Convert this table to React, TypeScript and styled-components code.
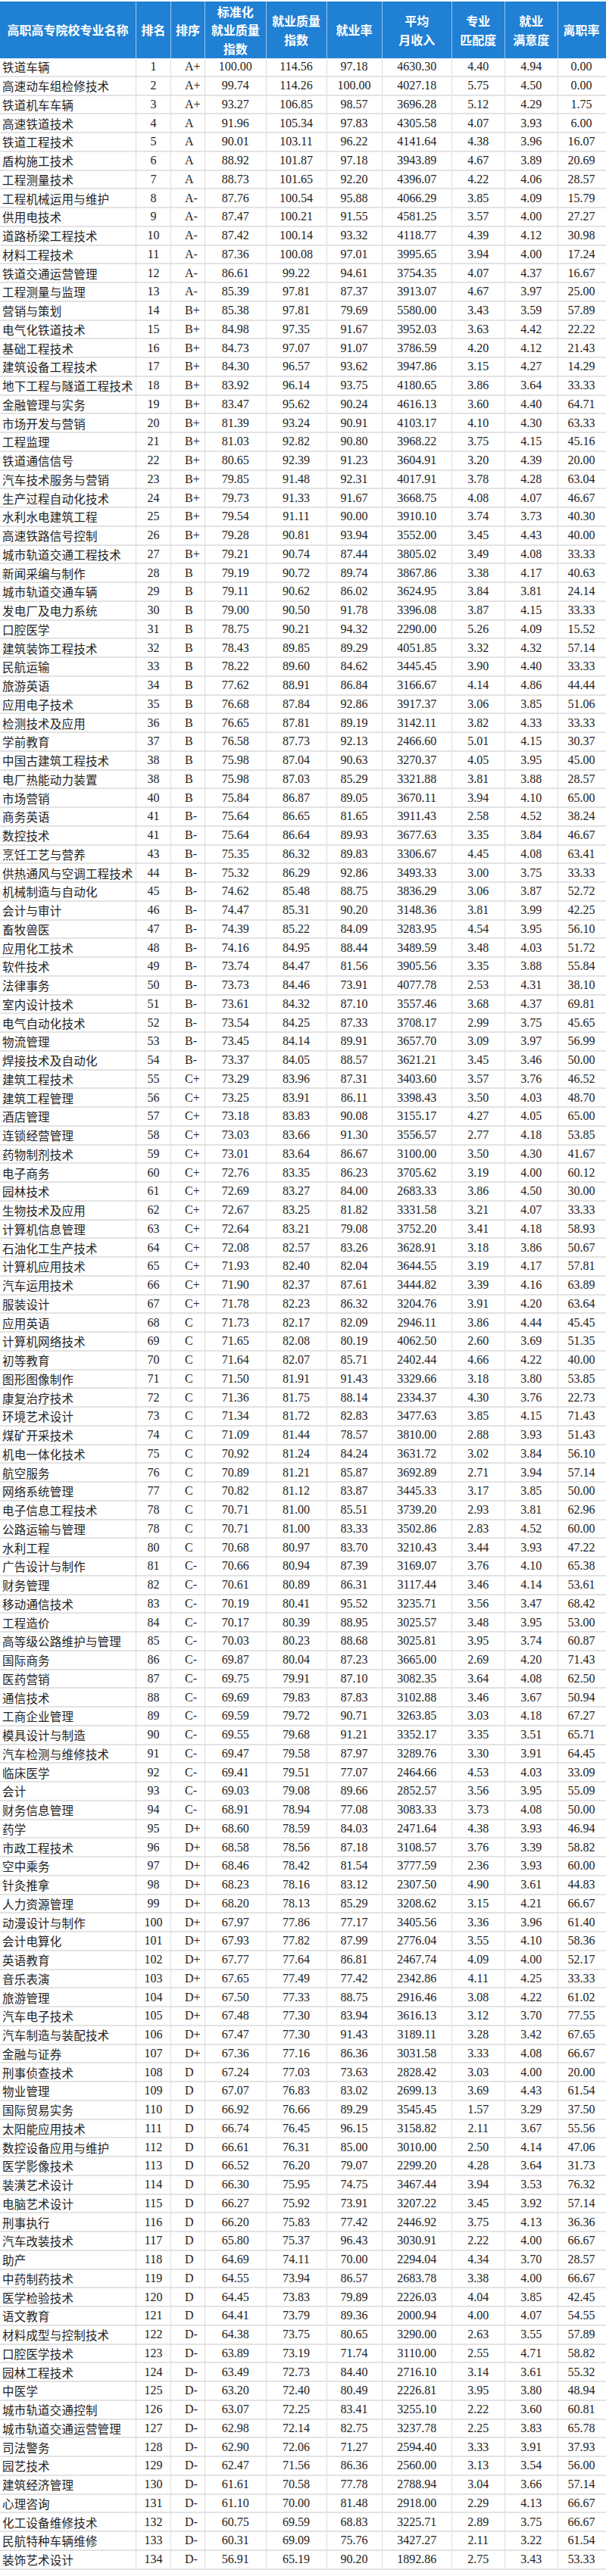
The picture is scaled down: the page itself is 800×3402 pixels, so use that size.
import React from "react";
import styled, { createGlobalStyle } from "styled-components";

const GlobalStyle = createGlobalStyle`
    body{
        margin:0;
        background:#fff;
    }
`;

const COLS = "180px 46px 45px 80.5px 80px 73px 92.5px 69.5px 70.5px 61px";

const DATA = `铁道车辆 1 A+ 100.00 114.56 97.18 4630.30 4.40 4.94 0.00
高速动车组检修技术 2 A+ 99.74 114.26 100.00 4027.18 5.75 4.50 0.00
铁道机车车辆 3 A+ 93.27 106.85 98.57 3696.28 5.12 4.29 1.75
高速铁道技术 4 A 91.96 105.34 97.83 4305.58 4.07 3.93 6.00
铁道工程技术 5 A 90.01 103.11 96.22 4141.64 4.38 3.96 16.07
盾构施工技术 6 A 88.92 101.87 97.18 3943.89 4.67 3.89 20.69
工程测量技术 7 A 88.73 101.65 92.20 4396.07 4.22 4.06 28.57
工程机械运用与维护 8 A- 87.76 100.54 95.88 4066.29 3.85 4.09 15.79
供用电技术 9 A- 87.47 100.21 91.55 4581.25 3.57 4.00 27.27
道路桥梁工程技术 10 A- 87.42 100.14 93.32 4118.77 4.39 4.12 30.98
材料工程技术 11 A- 87.36 100.08 97.01 3995.65 3.94 4.00 17.24
铁道交通运营管理 12 A- 86.61 99.22 94.61 3754.35 4.07 4.37 16.67
工程测量与监理 13 A- 85.39 97.81 87.37 3913.07 4.67 3.97 25.00
营销与策划 14 B+ 85.38 97.81 79.69 5580.00 3.43 3.59 57.89
电气化铁道技术 15 B+ 84.98 97.35 91.67 3952.03 3.63 4.42 22.22
基础工程技术 16 B+ 84.73 97.07 91.07 3786.59 4.20 4.12 21.43
建筑设备工程技术 17 B+ 84.30 96.57 93.62 3947.86 3.15 4.27 14.29
地下工程与隧道工程技术 18 B+ 83.92 96.14 93.75 4180.65 3.86 3.64 33.33
金融管理与实务 19 B+ 83.47 95.62 90.24 4616.13 3.60 4.40 64.71
市场开发与营销 20 B+ 81.39 93.24 90.91 4103.17 4.10 4.30 63.33
工程监理 21 B+ 81.03 92.82 90.80 3968.22 3.75 4.15 45.16
铁道通信信号 22 B+ 80.65 92.39 91.23 3604.91 3.20 4.39 20.00
汽车技术服务与营销 23 B+ 79.85 91.48 92.31 4017.91 3.78 4.28 63.04
生产过程自动化技术 24 B+ 79.73 91.33 91.67 3668.75 4.08 4.07 46.67
水利水电建筑工程 25 B+ 79.54 91.11 90.00 3910.10 3.74 3.73 40.30
高速铁路信号控制 26 B+ 79.28 90.81 93.94 3552.00 3.45 4.43 40.00
城市轨道交通工程技术 27 B+ 79.21 90.74 87.44 3805.02 3.49 4.08 33.33
新闻采编与制作 28 B 79.19 90.72 89.74 3867.86 3.38 4.17 40.63
城市轨道交通车辆 29 B 79.11 90.62 86.02 3624.95 3.84 3.81 24.14
发电厂及电力系统 30 B 79.00 90.50 91.78 3396.08 3.87 4.15 33.33
口腔医学 31 B 78.75 90.21 94.32 2290.00 5.26 4.09 15.52
建筑装饰工程技术 32 B 78.43 89.85 89.29 4051.85 3.32 4.32 57.14
民航运输 33 B 78.22 89.60 84.62 3445.45 3.90 4.40 33.33
旅游英语 34 B 77.62 88.91 86.84 3166.67 4.14 4.86 44.44
应用电子技术 35 B 76.68 87.84 92.86 3917.37 3.06 3.85 51.06
检测技术及应用 36 B 76.65 87.81 89.19 3142.11 3.82 4.33 33.33
学前教育 37 B 76.58 87.73 92.13 2466.60 5.01 4.15 30.37
中国古建筑工程技术 38 B 75.98 87.04 90.63 3270.37 4.05 3.95 45.00
电厂热能动力装置 38 B 75.98 87.03 85.29 3321.88 3.81 3.88 28.57
市场营销 40 B 75.84 86.87 89.05 3670.11 3.94 4.10 65.00
商务英语 41 B- 75.64 86.65 81.65 3911.43 2.58 4.52 38.24
数控技术 41 B- 75.64 86.64 89.93 3677.63 3.35 3.84 46.67
烹饪工艺与营养 43 B- 75.35 86.32 89.83 3306.67 4.45 4.08 63.41
供热通风与空调工程技术 44 B- 75.32 86.29 92.86 3493.33 3.00 3.75 33.33
机械制造与自动化 45 B- 74.62 85.48 88.75 3836.29 3.06 3.87 52.72
会计与审计 46 B- 74.47 85.31 90.20 3148.36 3.81 3.99 42.25
畜牧兽医 47 B- 74.39 85.22 84.09 3283.95 4.54 3.95 56.10
应用化工技术 48 B- 74.16 84.95 88.44 3489.59 3.48 4.03 51.72
软件技术 49 B- 73.74 84.47 81.56 3905.56 3.35 3.88 55.84
法律事务 50 B- 73.73 84.46 73.91 4077.78 2.53 4.31 38.10
室内设计技术 51 B- 73.61 84.32 87.10 3557.46 3.68 4.37 69.81
电气自动化技术 52 B- 73.54 84.25 87.33 3708.17 2.99 3.75 45.65
物流管理 53 B- 73.45 84.14 89.91 3657.70 3.09 3.97 56.99
焊接技术及自动化 54 B- 73.37 84.05 88.57 3621.21 3.45 3.46 50.00
建筑工程技术 55 C+ 73.29 83.96 87.31 3403.60 3.57 3.76 46.52
建筑工程管理 56 C+ 73.25 83.91 86.11 3398.43 3.50 4.03 48.70
酒店管理 57 C+ 73.18 83.83 90.08 3155.17 4.27 4.05 65.00
连锁经营管理 58 C+ 73.03 83.66 91.30 3556.57 2.77 4.18 53.85
药物制剂技术 59 C+ 73.01 83.64 86.67 3100.00 3.50 4.30 41.67
电子商务 60 C+ 72.76 83.35 86.23 3705.62 3.19 4.00 60.12
园林技术 61 C+ 72.69 83.27 84.00 2683.33 3.86 4.50 30.00
生物技术及应用 62 C+ 72.67 83.25 81.82 3331.58 3.21 4.07 33.33
计算机信息管理 63 C+ 72.64 83.21 79.08 3752.20 3.41 4.18 58.93
石油化工生产技术 64 C+ 72.08 82.57 83.26 3628.91 3.18 3.86 50.67
计算机应用技术 65 C+ 71.93 82.40 82.04 3644.55 3.19 4.17 57.81
汽车运用技术 66 C+ 71.90 82.37 87.61 3444.82 3.39 4.16 63.89
服装设计 67 C+ 71.78 82.23 86.32 3204.76 3.91 4.20 63.64
应用英语 68 C 71.73 82.17 82.09 2946.11 3.86 4.44 45.45
计算机网络技术 69 C 71.65 82.08 80.19 4062.50 2.60 3.69 51.35
初等教育 70 C 71.64 82.07 85.71 2402.44 4.66 4.22 40.00
图形图像制作 71 C 71.50 81.91 91.43 3329.66 3.18 3.80 53.85
康复治疗技术 72 C 71.36 81.75 88.14 2334.37 4.30 3.76 22.73
环境艺术设计 73 C 71.34 81.72 82.83 3477.63 3.85 4.15 71.43
煤矿开采技术 74 C 71.09 81.44 78.57 3810.00 2.88 3.93 51.43
机电一体化技术 75 C 70.92 81.24 84.24 3631.72 3.02 3.84 56.10
航空服务 76 C 70.89 81.21 85.87 3692.89 2.71 3.94 57.14
网络系统管理 77 C 70.82 81.12 83.87 3445.33 3.17 3.85 50.00
电子信息工程技术 78 C 70.71 81.00 85.51 3739.20 2.93 3.81 62.96
公路运输与管理 78 C 70.71 81.00 83.33 3502.86 2.83 4.52 60.00
水利工程 80 C 70.68 80.97 83.70 3210.43 3.44 3.93 47.22
广告设计与制作 81 C- 70.66 80.94 87.39 3169.07 3.76 4.10 65.38
财务管理 82 C- 70.61 80.89 86.31 3117.44 3.46 4.14 53.61
移动通信技术 83 C- 70.19 80.41 95.52 3235.71 3.56 3.47 68.42
工程造价 84 C- 70.17 80.39 88.95 3025.57 3.48 3.95 53.00
高等级公路维护与管理 85 C- 70.03 80.23 88.68 3025.81 3.95 3.74 60.87
国际商务 86 C- 69.87 80.04 87.23 3665.00 2.69 4.20 71.43
医药营销 87 C- 69.75 79.91 87.10 3082.35 3.64 4.08 62.50
通信技术 88 C- 69.69 79.83 87.83 3102.88 3.46 3.67 50.94
工商企业管理 89 C- 69.59 79.72 90.71 3263.85 3.03 4.18 67.27
模具设计与制造 90 C- 69.55 79.68 91.21 3352.17 3.35 3.51 65.71
汽车检测与维修技术 91 C- 69.47 79.58 87.97 3289.76 3.30 3.91 64.45
临床医学 92 C- 69.41 79.51 77.07 2464.66 4.53 4.03 33.09
会计 93 C- 69.03 79.08 89.66 2852.57 3.56 3.95 55.09
财务信息管理 94 C- 68.91 78.94 77.08 3083.33 3.73 4.08 50.00
药学 95 D+ 68.60 78.59 84.03 2471.64 4.38 3.93 46.94
市政工程技术 96 D+ 68.58 78.56 87.18 3108.57 3.76 3.39 58.82
空中乘务 97 D+ 68.46 78.42 81.54 3777.59 2.36 3.93 60.00
针灸推拿 98 D+ 68.23 78.16 83.12 2307.50 4.90 3.61 44.83
人力资源管理 99 D+ 68.20 78.13 85.29 3208.62 3.15 4.21 66.67
动漫设计与制作 100 D+ 67.97 77.86 77.17 3405.56 3.36 3.96 61.40
会计电算化 101 D+ 67.93 77.82 87.99 2776.04 3.55 4.10 58.36
英语教育 102 D+ 67.77 77.64 86.81 2467.74 4.09 4.00 52.17
音乐表演 103 D+ 67.65 77.49 77.42 2342.86 4.11 4.25 33.33
旅游管理 104 D+ 67.50 77.33 88.75 2916.46 3.08 4.22 61.02
汽车电子技术 105 D+ 67.48 77.30 83.94 3616.13 3.12 3.70 77.55
汽车制造与装配技术 106 D+ 67.47 77.30 91.43 3189.11 3.28 3.42 67.65
金融与证券 107 D+ 67.36 77.16 86.36 3031.58 3.33 4.08 66.67
刑事侦查技术 108 D 67.24 77.03 73.63 2828.42 3.03 4.00 20.00
物业管理 109 D 67.07 76.83 83.02 2699.13 3.69 4.43 61.54
国际贸易实务 110 D 66.92 76.66 89.29 3545.45 1.57 3.29 37.50
太阳能应用技术 111 D 66.74 76.45 96.15 3158.82 2.11 3.67 55.56
数控设备应用与维护 112 D 66.61 76.31 85.00 3010.00 2.50 4.14 47.06
医学影像技术 113 D 66.52 76.20 79.07 2299.20 4.28 3.64 31.73
装潢艺术设计 114 D 66.30 75.95 74.75 3467.44 3.94 3.53 76.32
电脑艺术设计 115 D 66.27 75.92 73.91 3207.22 3.45 3.92 57.14
刑事执行 116 D 66.20 75.83 77.42 2446.92 3.75 4.13 36.36
汽车改装技术 117 D 65.80 75.37 96.43 3030.91 2.22 4.00 66.67
助产 118 D 64.69 74.11 70.00 2294.04 4.34 3.70 28.57
中药制药技术 119 D 64.55 73.94 86.57 2683.78 3.38 4.00 66.67
医学检验技术 120 D 64.45 73.83 79.89 2226.03 4.04 3.85 42.45
语文教育 121 D 64.41 73.79 89.36 2000.94 4.00 4.07 54.55
材料成型与控制技术 122 D- 64.38 73.75 80.65 3290.00 2.63 3.55 57.89
口腔医学技术 123 D- 63.89 73.19 71.74 3110.00 2.55 4.71 58.82
园林工程技术 124 D- 63.49 72.73 84.40 2716.10 3.14 3.61 55.32
中医学 125 D- 63.20 72.40 80.49 2226.81 3.95 3.80 48.94
城市轨道交通控制 126 D- 63.07 72.25 83.41 3255.10 2.22 3.60 60.81
城市轨道交通运营管理 127 D- 62.98 72.14 82.75 3237.78 2.25 3.83 65.78
司法警务 128 D- 62.90 72.06 71.27 2594.40 3.33 3.91 37.93
园艺技术 129 D- 62.47 71.56 86.36 2560.00 3.13 3.54 56.00
建筑经济管理 130 D- 61.61 70.58 77.78 2788.94 3.04 3.66 57.14
心理咨询 131 D- 61.10 70.00 81.48 2918.00 2.29 4.13 66.67
化工设备维修技术 132 D- 60.75 69.59 68.83 3225.71 2.89 3.75 66.67
民航特种车辆维修 133 D- 60.31 69.09 75.76 3427.27 2.11 3.22 61.54
装饰艺术设计 134 D- 56.91 65.19 90.20 1892.86 2.75 3.43 53.33`;

const HEADERS = [
    ["高职高专院校专业名称"],
    ["排名"],
    ["排序"],
    ["标准化", "就业质量", "指数"],
    ["就业质量", "指数"],
    ["就业率"],
    ["平均", "月收入"],
    ["专业", "匹配度"],
    ["就业", "满意度"],
    ["离职率"],
];

const Page = styled.div`
    width:800px;
    padding-top:2px;
`;

const HeaderRow = styled.div`
    display:grid;
    grid-template-columns:${COLS};
    height:75px;
    background:#1f80d4;
`;

const HeadCell = styled.div`
    display:flex;
    flex-direction:column;
    align-items:center;
    justify-content:center;
    text-align:center;
    color:#fff;
    font-family:"Noto Sans CJK SC", sans-serif;
    font-weight:700;
    font-size:16px;
    line-height:24.5px;
    white-space:nowrap;
    border-right:1px solid rgba(255,255,255,0.55);
    &:last-child{
        border-right:none;
    }
`;

const Row = styled.div`
    display:grid;
    grid-template-columns:${COLS};
    height:24.76px;
    box-sizing:border-box;
    border-bottom:2px solid #e3e3e3;
`;

const Cell = styled.div<{ $align?: "left" | "center"; $pad?: number }>`
    display:flex;
    align-items:center;
    justify-content:${({ $align }) => ($align === "left" ? "flex-start" : "center")};
    padding-left:${({ $pad }) => $pad ?? 0}px;
    border-right:1px solid #dcdcdc;
    color:#232323;
    font-family:"Liberation Serif", "Noto Sans CJK SC", serif;
    font-size:16px;
    white-space:nowrap;
    overflow:hidden;
    &:last-child{
        border-right:none;
    }
`;

const NameCell = styled(Cell)`
    font-family:"Noto Sans CJK SC", sans-serif;
    font-size:15.5px;
    letter-spacing:0.2px;
`;

function App() {
    const rows = DATA.split("\n").map(line => line.trim().split(/\s+/));

    return <Page>
        <GlobalStyle />
        <HeaderRow>
            {HEADERS.map((lines, i) => <HeadCell key={i}>
                {lines.map(l => <span key={l}>{l}</span>)}
            </HeadCell>)}
        </HeaderRow>
        {rows.map(([name, rank, grade, ...nums], index) => {
            return <Row key={index}>
                <NameCell $align="left" $pad={3}>{name}</NameCell>
                <Cell>{rank}</Cell>
                <Cell $align="left" $pad={18}>{grade}</Cell>
                {nums.map((n, j) => <Cell key={j}>{n}</Cell>)}
            </Row>
        })}
    </Page>
}

export default App;
